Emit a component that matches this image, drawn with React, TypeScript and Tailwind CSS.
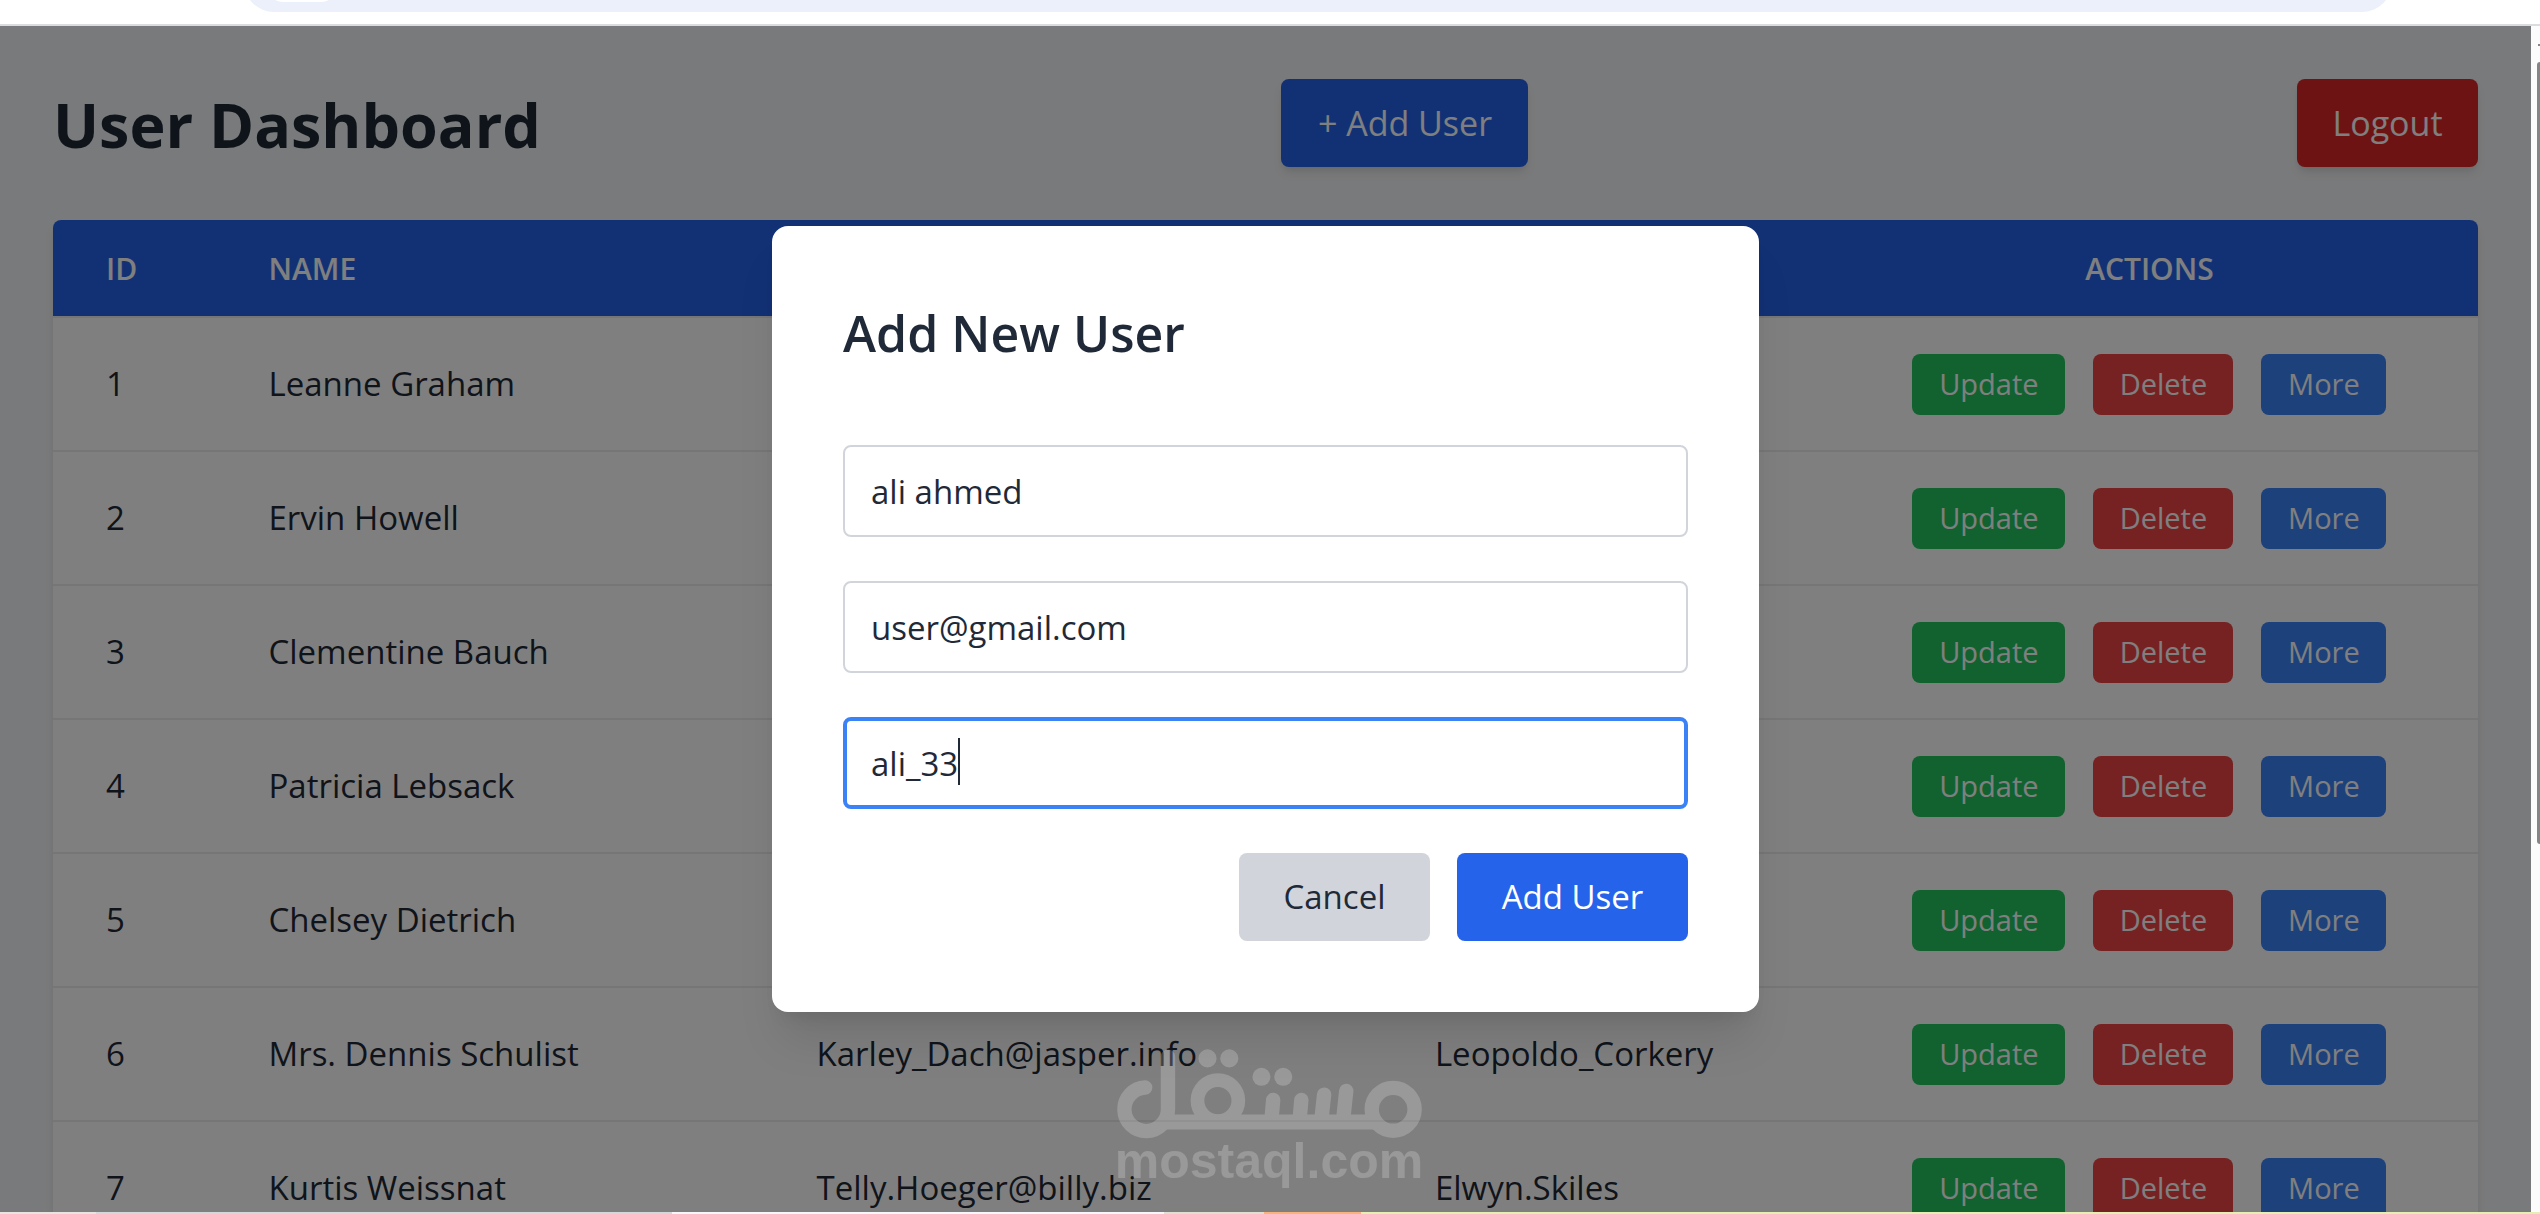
import { useState } from "react";

type User = { id: number; name: string; email?: string; username?: string };

const users: User[] = [
  { id: 1, name: "Leanne Graham" },
  { id: 2, name: "Ervin Howell" },
  { id: 3, name: "Clementine Bauch" },
  { id: 4, name: "Patricia Lebsack" },
  { id: 5, name: "Chelsey Dietrich" },
  { id: 6, name: "Mrs. Dennis Schulist", email: "Karley_Dach@jasper.info", username: "Leopoldo_Corkery" },
  { id: 7, name: "Kurtis Weissnat", email: "Telly.Hoeger@billy.biz", username: "Elwyn.Skiles" },
];

function BrowserBar() {
  return (
    <div className="flex h-[26px] shrink-0 justify-center overflow-hidden border-b-2 border-[#dadce0] bg-white pr-[148px] pl-[244px]">
      <div className="-mt-12 flex h-[60px] grow items-end rounded-full bg-[#ecf0fa] pl-5">
        <div className="mb-2.5 h-10 w-[76px] rounded-full bg-white" />
      </div>
    </div>
  );
}

function Header() {
  return (
    <header className="mb-[53px] flex h-[88px] items-center justify-between">
      <h1 className="pt-1 text-[61px] leading-[72px] font-bold whitespace-nowrap text-[#1f2937]">User Dashboard</h1>
      <button className="mr-7 h-[88px] w-[247px] rounded-lg bg-[#2563eb] text-[34px] text-white shadow-[0_7px_11px_-2px_rgba(0,0,0,0.1),0_4px_7px_-4px_rgba(0,0,0,0.1)]">
        + Add User
      </button>
      <button className="h-[88px] w-[181px] rounded-lg bg-[#dc2626] text-[34px] text-white shadow-[0_7px_11px_-2px_rgba(0,0,0,0.1),0_4px_7px_-4px_rgba(0,0,0,0.1)]">
        Logout
      </button>
    </header>
  );
}

function UserTable() {
  return (
    <div className="overflow-hidden rounded-t-lg bg-white shadow-[0_7px_11px_-2px_rgba(0,0,0,0.1),0_4px_7px_-4px_rgba(0,0,0,0.1)]">
      <table className="w-full table-fixed border-collapse text-left text-[33px] text-[#1f2937]">
        <colgroup>
          <col className="w-[6.7%]" />
          <col className="w-[22.6%]" />
          <col className="w-[25.5%]" />
          <col className="w-[18.1%]" />
          <col />
        </colgroup>
        <thead className="bg-[#2563eb] text-[30px] text-white">
          <tr className="h-[97px]">
            <th scope="col" className="pl-[53px] font-semibold">ID</th>
            <th scope="col" className="pl-[53px] font-semibold">NAME</th>
            <td />
            <td />
            <th scope="col" className="text-center font-semibold">ACTIONS</th>
          </tr>
        </thead>
        <tbody>
          {users.map((user) => (
            <tr key={user.id} className="h-[134px] border-y-2 border-[#ececee]">
              <td className="pl-[53px]">{user.id}</td>
              <td className="pl-[53px] whitespace-nowrap">{user.name}</td>
              <td className="pl-[53px] whitespace-nowrap">{user.email}</td>
              <td className="pl-[53px] whitespace-nowrap">{user.username}</td>
              <td>
                <div className="flex justify-center gap-7 text-[29px] text-white">
                  <button className="h-[61px] w-[153px] rounded-lg bg-[#22c55e]">Update</button>
                  <button className="h-[61px] w-[140px] rounded-lg bg-[#ef4444]">Delete</button>
                  <button className="h-[61px] w-[125px] rounded-lg bg-[#3b82f6]">More</button>
                </div>
              </td>
            </tr>
          ))}
        </tbody>
      </table>
    </div>
  );
}

function AddUserDialog() {
  const [name, setName] = useState("ali ahmed");
  const [email, setEmail] = useState("user@gmail.com");
  const [username, setUsername] = useState("ali_33");
  return (
    <div className="absolute inset-0 flex items-center justify-center bg-black/50">
      <form
        role="dialog"
        aria-label="Add New User"
        onSubmit={(event) => event.preventDefault()}
        className="w-[987px] rounded-2xl bg-white p-[71px] text-[33px] text-[#1f2937] shadow-[0_36px_45px_-9px_rgba(0,0,0,0.1),0_14px_18px_-11px_rgba(0,0,0,0.1)]"
      >
        <h2 className="mb-[76px] text-[50px] leading-[72px] font-semibold">Add New User</h2>
        <div className="flex flex-col gap-11">
          <input
            aria-label="Name"
            value={name}
            onChange={(event) => setName(event.target.value)}
            className="h-[92px] w-full rounded-lg border-2 border-[#d1d5db] px-[26px] outline-none"
          />
          <input
            aria-label="Email"
            value={email}
            onChange={(event) => setEmail(event.target.value)}
            className="h-[92px] w-full rounded-lg border-2 border-[#d1d5db] px-[26px] outline-none"
          />
          <div className="relative">
            <input
              aria-label="Username"
              value={username}
              onChange={(event) => setUsername(event.target.value)}
              className="h-[92px] w-full rounded-lg border-4 border-[#3b82f6] px-6 caret-transparent outline-none"
            />
            <span className="absolute top-[21px] left-[115px] h-[47px] w-0.5 bg-[#1f2937]" />
          </div>
          <div className="flex justify-end gap-[27px]">
            <button type="button" className="h-[88px] w-[191px] rounded-lg bg-[#d1d5db]">Cancel</button>
            <button type="submit" className="h-[88px] w-[231px] rounded-lg bg-[#2563eb] text-white">Add User</button>
          </div>
        </div>
      </form>
    </div>
  );
}

function Watermark() {
  return (
    <div className="pointer-events-none absolute bottom-[29px] left-[1114px] flex w-[310px] flex-col items-center opacity-20">
      <svg viewBox="105 85 925 275" className="w-full" fill="none" stroke="#fff" strokeLinecap="round" aria-hidden="true">
        <path d="M198 206A65 65 0 1 0 266 271V114" strokeWidth="43" />
        <path d="M250 309H892" strokeWidth="45" strokeLinecap="butt" />
        <circle cx="415" cy="245" r="61" strokeWidth="41" />
        <circle cx="938" cy="271" r="64" strokeWidth="43" />
        <path d="M580 243L575 300M664 243L659 300M732 227L724 300M798 216L789 300" strokeWidth="43" />
        <g fill="#fff" stroke="none">
          <circle cx="384" cy="119" r="27" />
          <circle cx="449" cy="119" r="27" />
          <circle cx="545" cy="174" r="27" />
          <circle cx="610" cy="174" r="27" />
        </g>
      </svg>
      <span className="font-['Liberation_Sans',sans-serif] text-[50px] leading-[44px] font-bold text-white">mostaql.com</span>
    </div>
  );
}

function Scrollbar() {
  return (
    <div className="flex w-[9px] shrink-0 flex-col items-end overflow-hidden bg-[#fcfcfc]">
      <div className="mt-[18px] h-0.5 w-0.5 bg-[#858585]" />
      <div className="mt-4 h-[782px] w-[3px] rounded-l-full bg-[#858585]" />
    </div>
  );
}

function TaskbarEdge() {
  return (
    <div className="flex h-0.5 shrink-0">
      <div className="flex-[96] bg-[#e8e5e1]" />
      <div className="flex-[576] bg-[#d3d8db]" />
      <div className="flex-[492] bg-[#f6f7fa]" />
      <div className="flex-[100] bg-[#dfe0d2]" />
      <div className="flex-[97] bg-[#f8b27a]" />
      <div className="flex-[1179] bg-[#e6efb2]" />
    </div>
  );
}

export default function App() {
  return (
    <div className="flex h-screen flex-col overflow-hidden font-['Open_Sans',sans-serif]">
      <BrowserBar />
      <div className="flex min-h-0 grow">
        <div className="relative min-w-0 grow overflow-hidden bg-[#f3f4f6]">
          <main className="p-[53px]">
            <Header />
            <UserTable />
          </main>
          <AddUserDialog />
          <Watermark />
        </div>
        <Scrollbar />
      </div>
      <TaskbarEdge />
    </div>
  );
}
